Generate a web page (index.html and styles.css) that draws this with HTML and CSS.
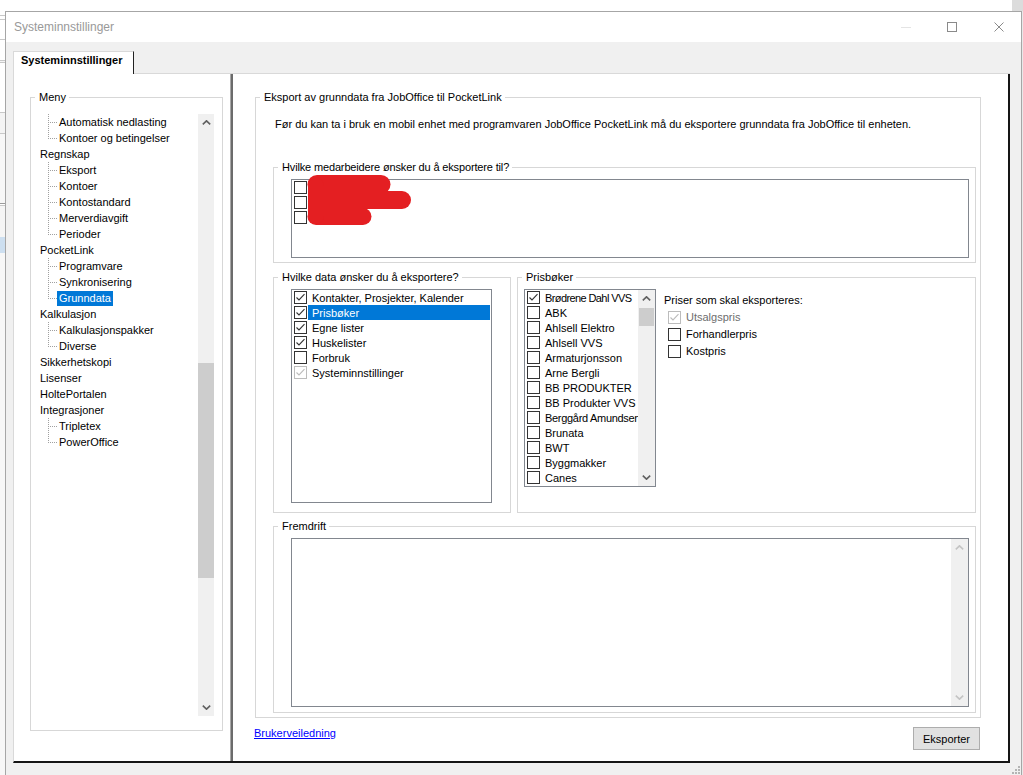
FILE: index.html
```html
<!DOCTYPE html>
<html lang="no">
<head>
<meta charset="utf-8">
<title>Systeminnstillinger</title>
<link rel="stylesheet" href="styles.css">
</head>
<body>
<div class="screen">
  <div class="topstrip"><div class="bgscroll"></div></div>
  <div class="row">
    <div class="bg-left"></div>
    <div class="window">
      <div class="titlebar">
        <span class="title">Systeminnstillinger</span>
        <div class="winbtn"><svg width="10" height="1" viewBox="0 0 10 1"><rect width="10" height="1" fill="#e4e4e4"/></svg></div>
        <div class="winbtn"><svg width="10" height="10" viewBox="0 0 10 10"><rect x="0.5" y="0.5" width="9" height="9" fill="none" stroke="#8a8a8a"/></svg></div>
        <div class="winbtn"><svg width="10" height="10" viewBox="0 0 10 10"><path d="M0.5 0.5L9.5 9.5M9.5 0.5L0.5 9.5" stroke="#8a8a8a" stroke-width="1"/></svg></div>
      </div>
      <div class="client">
        <div class="tabstrip">
          <div class="tab">Systeminnstillinger</div>
          <div class="tabfill"></div>
        </div>
        <div class="tabpage">
          <div class="leftpane">
            <fieldset class="gb gb-meny">
              <legend>Meny</legend>
              <div class="tree">
                <div class="tree-items">
                  <div class="tn"><span class="br"></span><span class="tl">Automatisk nedlasting</span></div>
                  <div class="tn"><span class="br last"></span><span class="tl">Kontoer og betingelser</span></div>
                  <div class="tn root"><span class="tl">Regnskap</span></div>
                  <div class="tn"><span class="br"></span><span class="tl">Eksport</span></div>
                  <div class="tn"><span class="br"></span><span class="tl">Kontoer</span></div>
                  <div class="tn"><span class="br"></span><span class="tl">Kontostandard</span></div>
                  <div class="tn"><span class="br"></span><span class="tl">Merverdiavgift</span></div>
                  <div class="tn"><span class="br last"></span><span class="tl">Perioder</span></div>
                  <div class="tn root"><span class="tl">PocketLink</span></div>
                  <div class="tn"><span class="br"></span><span class="tl">Programvare</span></div>
                  <div class="tn"><span class="br"></span><span class="tl">Synkronisering</span></div>
                  <div class="tn"><span class="br last"></span><span class="tl sel">Grunndata</span></div>
                  <div class="tn root"><span class="tl">Kalkulasjon</span></div>
                  <div class="tn"><span class="br"></span><span class="tl">Kalkulasjonspakker</span></div>
                  <div class="tn"><span class="br last"></span><span class="tl">Diverse</span></div>
                  <div class="tn root"><span class="tl">Sikkerhetskopi</span></div>
                  <div class="tn root"><span class="tl">Lisenser</span></div>
                  <div class="tn root"><span class="tl">HoltePortalen</span></div>
                  <div class="tn root"><span class="tl">Integrasjoner</span></div>
                  <div class="tn"><span class="br"></span><span class="tl">Tripletex</span></div>
                  <div class="tn"><span class="br last"></span><span class="tl">PowerOffice</span></div>
                </div>
                <div class="vscroll vs-tree">
                  <div class="sb-btn"><svg width="9" height="5" viewBox="0 0 9 5"><polyline points="0.8,4.3 4.5,0.8 8.2,4.3" fill="none" stroke="#606060" stroke-width="1.6"/></svg></div>
                  <div class="sb-track"><div class="sb-thumb thumb-tree"></div></div>
                  <div class="sb-btn"><svg width="9" height="5" viewBox="0 0 9 5"><polyline points="0.8,0.7 4.5,4.2 8.2,0.7" fill="none" stroke="#606060" stroke-width="1.6"/></svg></div>
                </div>
              </div>
            </fieldset>
          </div>
          <div class="splitter"></div>
          <div class="rightpane">
            <fieldset class="gb gb-export">
              <legend>Eksport av grunndata fra JobOffice til PocketLink</legend>
              <p class="desc">Før du kan ta i bruk en mobil enhet med programvaren JobOffice PocketLink må du eksportere grunndata fra JobOffice til enheten.</p>
              <fieldset class="gb gb-emp">
                <legend>Hvilke medarbeidere ønsker du å eksportere til?</legend>
                <div class="listbox lb-emp">
                  <div class="clrow"><span class="cb"></span></div>
                  <div class="clrow"><span class="cb"></span></div>
                  <div class="clrow"><span class="cb"></span></div>
                  <svg class="redact" width="110" height="52" viewBox="0 0 110 52">
                    <g stroke="#e41f22" stroke-linecap="round" fill="none">
                      <line x1="11" y1="10.5" x2="75" y2="10.5" stroke-width="19"/>
                      <line x1="11" y1="26" x2="96" y2="26" stroke-width="18"/>
                      <line x1="10" y1="42.5" x2="57" y2="42.5" stroke-width="17"/>
                      <line x1="10" y1="12" x2="10" y2="42" stroke-width="16"/>
                    </g>
                  </svg>
                </div>
              </fieldset>
              <div class="pair">
                <fieldset class="gb gb-data">
                  <legend>Hvilke data ønsker du å eksportere?</legend>
                  <div class="listbox lb-data">
                    <div class="clrow"><span class="cb"><svg width="11" height="11" viewBox="0 0 11 11"><polyline points="1.5,5.5 4,8 9.5,2.2" fill="none" stroke="#333" stroke-width="1.1"/></svg></span><span class="lbl">Kontakter, Prosjekter, Kalender</span></div>
                    <div class="clrow"><span class="cb"><svg width="11" height="11" viewBox="0 0 11 11"><polyline points="1.5,5.5 4,8 9.5,2.2" fill="none" stroke="#333" stroke-width="1.1"/></svg></span><span class="lbl sel">Prisbøker</span></div>
                    <div class="clrow"><span class="cb"><svg width="11" height="11" viewBox="0 0 11 11"><polyline points="1.5,5.5 4,8 9.5,2.2" fill="none" stroke="#333" stroke-width="1.1"/></svg></span><span class="lbl">Egne lister</span></div>
                    <div class="clrow"><span class="cb"><svg width="11" height="11" viewBox="0 0 11 11"><polyline points="1.5,5.5 4,8 9.5,2.2" fill="none" stroke="#333" stroke-width="1.1"/></svg></span><span class="lbl">Huskelister</span></div>
                    <div class="clrow"><span class="cb"></span><span class="lbl">Forbruk</span></div>
                    <div class="clrow"><span class="cb dis"><svg width="11" height="11" viewBox="0 0 11 11"><polyline points="1.5,5.5 4,8 9.5,2.2" fill="none" stroke="#bcbcbc" stroke-width="1.1"/></svg></span><span class="lbl">Systeminnstillinger</span></div>
                  </div>
                </fieldset>
                <fieldset class="gb gb-pris">
                  <legend>Prisbøker</legend>
                  <div class="pris-body">
                    <div class="listbox lb-pris">
                      <div class="pris-items">
                        <div class="clrow"><span class="cb"><svg width="11" height="11" viewBox="0 0 11 11"><polyline points="1.5,5.5 4,8 9.5,2.2" fill="none" stroke="#333" stroke-width="1.1"/></svg></span><span class="lbl tight">Brødrene Dahl VVS</span></div>
                        <div class="clrow"><span class="cb"></span><span class="lbl">ABK</span></div>
                        <div class="clrow"><span class="cb"></span><span class="lbl">Ahlsell Elektro</span></div>
                        <div class="clrow"><span class="cb"></span><span class="lbl">Ahlsell VVS</span></div>
                        <div class="clrow"><span class="cb"></span><span class="lbl">Armaturjonsson</span></div>
                        <div class="clrow"><span class="cb"></span><span class="lbl">Arne Bergli</span></div>
                        <div class="clrow"><span class="cb"></span><span class="lbl">BB PRODUKTER</span></div>
                        <div class="clrow"><span class="cb"></span><span class="lbl">BB Produkter VVS</span></div>
                        <div class="clrow"><span class="cb"></span><span class="lbl tight2">Berggård Amundsen</span></div>
                        <div class="clrow"><span class="cb"></span><span class="lbl">Brunata</span></div>
                        <div class="clrow"><span class="cb"></span><span class="lbl">BWT</span></div>
                        <div class="clrow"><span class="cb"></span><span class="lbl">Byggmakker</span></div>
                        <div class="clrow"><span class="cb"></span><span class="lbl">Canes</span></div>
                      </div>
                      <div class="vscroll">
                        <div class="sb-btn"><svg width="9" height="5" viewBox="0 0 9 5"><polyline points="0.8,4.3 4.5,0.8 8.2,4.3" fill="none" stroke="#606060" stroke-width="1.6"/></svg></div>
                        <div class="sb-track"><div class="sb-thumb thumb-pris"></div></div>
                        <div class="sb-btn"><svg width="9" height="5" viewBox="0 0 9 5"><polyline points="0.8,0.7 4.5,4.2 8.2,0.7" fill="none" stroke="#606060" stroke-width="1.6"/></svg></div>
                      </div>
                    </div>
                    <div class="prices">
                      <div class="prices-title">Priser som skal eksporteres:</div>
                      <div class="opt"><span class="cb dis"><svg width="11" height="11" viewBox="0 0 11 11"><polyline points="1.5,5.5 4,8 9.5,2.2" fill="none" stroke="#bcbcbc" stroke-width="1.1"/></svg></span><span class="opt-text gray">Utsalgspris</span></div>
                      <div class="opt"><span class="cb"></span><span class="opt-text">Forhandlerpris</span></div>
                      <div class="opt"><span class="cb"></span><span class="opt-text">Kostpris</span></div>
                    </div>
                  </div>
                </fieldset>
              </div>
              <fieldset class="gb gb-prog">
                <legend>Fremdrift</legend>
                <div class="textarea">
                  <div class="vscroll disabled">
                    <div class="sb-btn"><svg width="9" height="5" viewBox="0 0 9 5"><polyline points="0.8,4.3 4.5,0.8 8.2,4.3" fill="none" stroke="#c4c4c4" stroke-width="1.6"/></svg></div>
                    <div class="sb-track"></div>
                    <div class="sb-btn"><svg width="9" height="5" viewBox="0 0 9 5"><polyline points="0.8,0.7 4.5,4.2 8.2,0.7" fill="none" stroke="#c4c4c4" stroke-width="1.6"/></svg></div>
                  </div>
                </div>
              </fieldset>
            </fieldset>
            <div class="footer">
              <a class="link" href="#">Brukerveiledning</a>
              <button class="btn" type="button">Eksporter</button>
            </div>
          </div>
        </div>
        <svg class="grip" width="9" height="9" viewBox="0 0 9 9">
          <g fill="#b4b4b4">
            <rect x="7" y="1" width="2" height="2"/>
            <rect x="4" y="4" width="2" height="2"/><rect x="7" y="4" width="2" height="2"/>
            <rect x="1" y="7" width="2" height="2"/><rect x="4" y="7" width="2" height="2"/><rect x="7" y="7" width="2" height="2"/>
          </g>
        </svg>
      </div>
    </div>
    <div class="bg-right"></div>
  </div>
</div>
</body>
</html>
```
FILE: styles.css
```css
* { box-sizing: border-box; }
html, body { margin: 0; padding: 0; }
body {
  width: 1023px;
  height: 775px;
  overflow: hidden;
  background: #fff;
  font-family: "Liberation Sans", Arial, sans-serif;
  font-size: 11px;
  line-height: 13px;
  color: #000;
}
.screen { display: flex; flex-direction: column; width: 1023px; height: 775px; }
.topstrip { height: 11px; display: flex; justify-content: flex-end; }
.bgscroll { width: 11px; height: 11px; background: #dcdcdc; }
.row { display: flex; height: 764px; }
.bg-left {
  width: 5px;
  background: linear-gradient(to bottom,
    #fff 0 4px, #c8c8c8 4px 5px, #fff 5px 8px, #c8c8c8 8px 9px,
    #fff 9px 28px, #c8c8c8 28px 29px, #fff 29px 49px, #c8c8c8 49px 50px,
    #f5f5f5 50px 51px, #c8c8c8 51px 52px, #fff 52px 101px, #c8c8c8 101px 102px,
    #f4f4f4 102px 122px, #c8c8c8 122px 123px, #f7f7f7 123px 192px, #9a9a9a 192px 193px,
    #fff 193px 194px, #c8c8c8 194px 195px, #f5f5f5 195px 226px, #cddff0 226px 242px,
    #f7f7f7 242px);
}
.bg-right { width: 1px; background: #e8e8e8; }

.window {
  width: 1017px;
  height: 764px;
  border: 1px solid #a6a6a6;
  border-bottom: none;
  display: flex;
  flex-direction: column;
}
.titlebar { height: 30px; background: #fff; display: flex; align-items: center; }
.title { flex: 1; padding-left: 8px; font-size: 12px; color: #999; }
.winbtn { width: 46px; height: 30px; display: flex; align-items: center; justify-content: center; }
.winbtn:last-child { padding-left: 2px; }

.client { flex: 1; background: #f0f0f0; position: relative; display: flex; flex-direction: column; }
.tabstrip { height: 32px; display: flex; align-items: flex-end; padding-left: 7px; padding-right: 11px; }
.tab {
  width: 121px;
  height: 23px;
  background: #fff;
  border-left: 1px solid #d9d9d9;
  border-top: 1px solid #d9d9d9;
  border-right: 1px solid #222;
  padding: 2px 0 0 7px;
  font-weight: bold;
  white-space: nowrap;
}
.tabfill { flex: 1; height: 1px; background: #d9d9d9; }

.tabpage {
  margin-left: 7px;
  width: 997px;
  height: 689px;
  background: #fff;
  border-left: 1px solid #d9d9d9;
  border-right: 2px solid #151515;
  border-bottom: 2px solid #151515;
  display: flex;
}
.leftpane { width: 216px; flex: none; }
.splitter { width: 3px; flex: none; background: #6b6b6b; border-left: 1px solid #a8a8a8; }
.rightpane { flex: 1; padding-left: 22px; display: flex; flex-direction: column; }

/* group boxes */
.gb {
  margin: 0;
  padding: 0;
  min-width: 0;
  border: 1px solid #d7d7d7;
}
.gb > legend {
  margin-left: 4px;
  padding: 0 3px 0 4px;
  line-height: 13px;
  height: 13px;
  white-space: nowrap;
}
.gb-meny { margin: 17px 0 0 16px; width: 193px; height: 640px; }
.gb-export { margin-top: 17px; width: 726px; height: 627px; }
.gb-emp { margin: 30px 0 0 17px; width: 703px; height: 102px; }
.gb-emp > legend { letter-spacing: -0.15px; }
.pair { display: flex; gap: 6px; margin: 8px 0 0 17px; }
.gb-data { width: 238px; height: 242px; }
.gb-pris { width: 459px; height: 242px; }
.gb-prog { margin: 7px 0 0 17px; width: 703px; height: 193px; }

.desc { margin: 14px 0 0 19px; white-space: nowrap; }

/* tree */
.tree { display: flex; width: 183px; height: 602px; margin-top: 10px; }
.tree-items { flex: 1; overflow: hidden; }
.tn { height: 16px; display: flex; align-items: center; white-space: nowrap; }
.tl { padding: 0 2px; height: 15px; line-height: 15px; }
.root .tl { margin-left: 7px; }
.tl.sel { background: #0078d7; color: #fff; }
.br {
  width: 9px;
  height: 16px;
  margin-left: 17px;
  flex: none;
  background-image:
    repeating-linear-gradient(to bottom, #a0a0a0 0 1px, transparent 1px 2px),
    repeating-linear-gradient(to right, #a0a0a0 0 1px, transparent 1px 2px);
  background-size: 1px 16px, 7px 1px;
  background-position: 0 0, 2px 8px;
  background-repeat: no-repeat;
}
.br.last { background-size: 1px 9px, 7px 1px; }

/* scrollbars */
.vscroll { width: 17px; flex: none; background: #f0f0f0; display: flex; flex-direction: column; }
.vs-tree { width: 16px; }
.sb-btn { height: 17px; flex: none; display: flex; align-items: center; justify-content: center; }
.sb-track { flex: 1; display: flex; flex-direction: column; }
.sb-thumb { background: #cdcdcd; }
.thumb-tree { margin-top: 232px; height: 215px; }
.thumb-pris { margin: 1px 1px 0; height: 18px; }

/* list boxes */
.listbox { border: 1px solid #82878f; background: #fff; }
.lb-emp { position: relative; margin: 5px 0 0 17px; width: 678px; height: 79px; }
.redact { position: absolute; left: 14px; top: -6px; overflow: visible; }
.lb-data { margin: 5px 0 0 17px; width: 201px; height: 214px; }
.clrow { height: 15px; display: flex; align-items: flex-start; white-space: nowrap; }
.cb {
  width: 13px;
  height: 13px;
  flex: none;
  margin: 1px 0 0 2px;
  border: 1px solid #333;
  background: #fff;
  display: flex;
}
.cb.dis { border-color: #bcbcbc; }
.lbl { flex: 1; margin-left: 1px; padding-left: 4px; height: 15px; line-height: 16px; margin-right: 1px; }
.lbl.sel { background: #0078d7; color: #fff; }

.pris-body { display: flex; align-items: flex-start; }
.lb-pris { display: flex; margin: 5px 0 0 6px; width: 132px; height: 198px; }
.pris-items { flex: 1; min-width: 0; overflow: hidden; }
.pris-items .lbl { overflow: hidden; margin-right: 0; }
.tight { letter-spacing: -0.6px; }
.tight2 { letter-spacing: -0.3px; }
.prices { margin: 10px 0 0 8px; }
.prices-title { white-space: nowrap; }
.opt { height: 17px; display: flex; align-items: center; padding-left: 4px; margin-top: 0; }
.prices-title + .opt { margin-top: 2px; }
.opt .cb { margin: 0; }
.opt-text { margin-left: 5px; white-space: nowrap; }
.gray { color: #6d6d6d; }

.textarea {
  margin: 5px 0 0 17px;
  width: 678px;
  height: 169px;
  border: 1px solid #82878f;
  background: #fff;
  display: flex;
  justify-content: flex-end;
}

/* footer */
.footer { display: flex; align-items: flex-start; margin-top: 9px; padding-right: 28px; }
.link { margin-left: -1px; color: #0000ff; text-decoration: underline; line-height: 13px; }
.btn {
  margin-left: auto;
  width: 67px;
  height: 23px;
  padding: 0;
  background: #e1e1e1;
  border: 1px solid #adadad;
  font-family: "Liberation Sans", Arial, sans-serif;
  font-size: 11px;
  color: #000;
}
.grip { position: absolute; right: 1px; bottom: 1px; }
```
